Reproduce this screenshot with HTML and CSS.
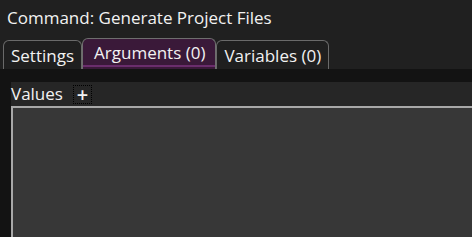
FILE: index.html
```html
<!DOCTYPE html>
<html>
<head>
<meta charset="utf-8">
<link rel="stylesheet" href="styles.css">
</head>
<body>
<div class="title">Command: Generate Project Files</div>
<div class="tabs">
  <div class="tab">Settings</div>
  <div class="tab active">Arguments (0)</div>
  <div class="tab">Variables (0)</div>
</div>
<div class="body">
  <div class="content">
    <div class="header">
      <span class="label">Values</span>
      <span class="add">+</span>
    </div>
    <div class="panel"></div>
  </div>
</div>
</body>
</html>
```
FILE: styles.css
```css
html, body {
  margin: 0;
  height: 100%;
}
body {
  background: #202020;
  color: #f2f2f2;
  font-family: "Open Sans", "Noto Sans", sans-serif;
  font-size: 17px;
  display: flex;
  flex-direction: column;
  overflow: hidden;
}
.title {
  height: 38px;
  padding: 6px 0 0 7px;
  box-sizing: border-box;
  line-height: 24px;
}
.tabs {
  display: flex;
  align-items: flex-end;
  padding-left: 3px;
  height: 31px;
}
.tab {
  height: 29px;
  box-sizing: border-box;
  border: 1px solid #6a6a6a;
  border-bottom: none;
  border-radius: 6px 6px 0 0;
  padding: 3px 7px 0 7px;
  line-height: 24px;
  background: #1f1f1f;
}
.tab.active {
  height: 31px;
  background: #3a1939;
  border-color: #6e6e6e;
  box-shadow: inset 0 -2px 0 #3a1939, inset 0 -4px 0 #6a2d6c;
  padding: 2px 10px 0 11px;
}
.body {
  flex: 1;
  background: #131313;
  padding: 13px 0 0 11px;
  display: flex;
}
.content {
  flex: 1;
  background: #262626;
  display: flex;
  flex-direction: column;
}
.header {
  height: 24px;
  display: flex;
  align-items: center;
  gap: 10px;
}
.label {
  line-height: 22px;
}
.add {
  width: 17px;
  height: 17px;
  border: 1px dotted #000;
  display: flex;
  align-items: center;
  justify-content: center;
  font-size: 20px;
  font-weight: 600;
  line-height: 17px;
}
.panel {
  flex: 1;
  background: #373737;
  border-top: 2px solid #a8a8a8;
  border-left: 2px solid #a8a8a8;
}
```
